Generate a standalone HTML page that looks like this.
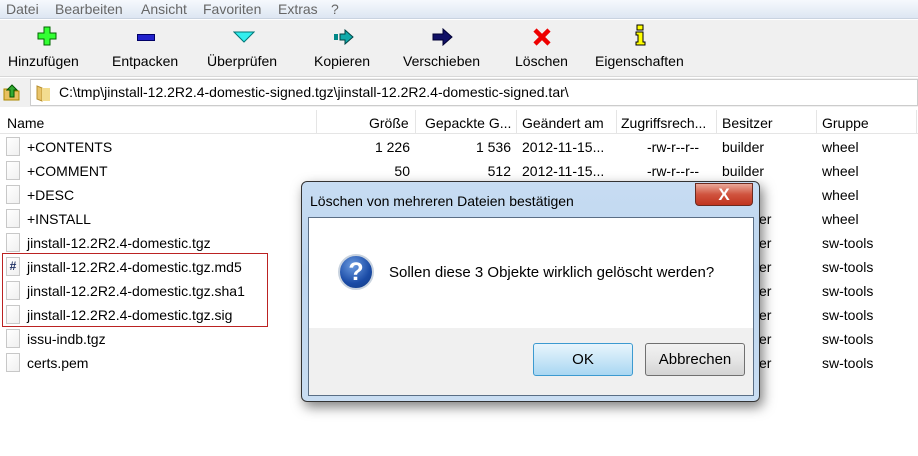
<!DOCTYPE html>
<html><head><style>
*{margin:0;padding:0;box-sizing:border-box}
body{width:918px;height:456px;overflow:hidden;background:#fff;font-family:"Liberation Sans",sans-serif;font-size:14px;color:#000;position:relative}
.abs{position:absolute}
.menu{left:0;top:0;width:918px;height:19px;background:linear-gradient(#f6f9fd,#dde6f2);color:#666;font-size:14px;border-bottom:1px solid #c9d3e0}
.menu span{position:absolute;top:1px}
.tb{left:0;top:20px;width:918px;height:57px;background:#f0f0f0;border-bottom:1px solid #d8d8d8}
.tb .l{position:absolute;top:33px;font-size:14px}
.addr{left:0;top:78px;width:918px;height:29px;background:#f0f0f0}
.addr .box{position:absolute;left:30px;top:1px;right:0;height:27px;background:#fff;border:1px solid #ccc}
.hdr{left:0;top:110px;width:918px;height:24px;border-bottom:1px solid #e5e5e5}
.hdr span{position:absolute;top:5px}
.sep{position:absolute;top:0;width:1px;height:24px;background:#e5e5e5}
.row{position:absolute;left:0;width:918px;height:24px}
.row span{position:absolute;top:4px;white-space:nowrap}
.fi{position:absolute;left:6px;top:2px;width:14px;height:19px;border:1px solid #c8c8c8;background:linear-gradient(135deg,#fff,#f0f0f0)}
.r{text-align:right}
</style></head><body>
<div class="abs menu"><span style="left:6px">Datei</span><span style="left:55px">Bearbeiten</span><span style="left:141px">Ansicht</span><span style="left:203px">Favoriten</span><span style="left:278px">Extras</span><span style="left:331px">?</span></div>
<div class="abs tb">
<svg class="abs" style="left:37px;top:6px" width="20" height="20"><path d="M7 1h6v6h6v6h-6v6H7v-6H1V7h6z" fill="#3f3" stroke="#060" stroke-width="1"/></svg>
<div class="abs" style="left:137px;top:14px;width:18px;height:7px;background:#22c;border:1px solid #006"></div>
<svg class="abs" style="left:233px;top:11px" width="22" height="12"><path d="M1 1h20L11 11z" fill="#3ee" stroke="#077"/></svg>
<svg class="abs" style="left:333px;top:9px" width="22" height="16"><rect x="1" y="5" width="4" height="6" fill="#088"/><path d="M7 5h5V1l8 7-8 7v-4H7z" fill="#1aa" stroke="#044"/></svg>
<svg class="abs" style="left:432px;top:8px" width="22" height="18"><path d="M1 6h10V1l9 8-9 8v-5H1z" fill="#116" stroke="#003"/></svg>
<svg class="abs" style="left:532px;top:7px" width="20" height="20"><path d="M3 3L17 17M17 3L3 17" stroke="#e00" stroke-width="4.5"/></svg>
<svg class="abs" style="left:634px;top:4px" width="13" height="22"><rect x="3" y="1" width="6" height="5" fill="#ff0" stroke="#000"/><path d="M2 8h7v10h2v3H2v-3h2v-7H2z" fill="#ff0" stroke="#000"/></svg>
<span class="l" style="left:8px">Hinzufügen</span><span class="l" style="left:112px">Entpacken</span><span class="l" style="left:207px">Überprüfen</span><span class="l" style="left:314px">Kopieren</span><span class="l" style="left:403px">Verschieben</span><span class="l" style="left:515px">Löschen</span><span class="l" style="left:595px">Eigenschaften</span>
</div>
<div class="abs addr">
<svg class="abs" style="left:3px;top:5px" width="18" height="18"><path d="M1 6h6l1 2h8v9H1z" fill="#e8c060" stroke="#a80"/><path d="M7 14V7H4l5-5 5 5h-3v7z" fill="#3a3" stroke="#050"/></svg>
<div class="box"><svg class="abs" style="left:4px;top:4px" width="16" height="18"><path d="M2 2l5 2v13l-5-2z" fill="#e9c46a" stroke="#b99030"/><path d="M7 4h8v13H7z" fill="#f3dc90"/></svg><span class="abs" style="left:28px;top:4px">C:\tmp\jinstall-12.2R2.4-domestic-signed.tgz\jinstall-12.2R2.4-domestic-signed.tar\</span></div>
</div>
<div class="abs hdr">
<span style="left:7px">Name</span><span style="left:369px">Größe</span><span style="left:425px">Gepackte G...</span><span style="left:522px">Geändert am</span><span style="left:621px">Zugriffsrech...</span><span style="left:722px">Besitzer</span><span style="left:822px">Gruppe</span>
<div class="sep" style="left:316px"></div><div class="sep" style="left:415px"></div><div class="sep" style="left:516px"></div><div class="sep" style="left:616px"></div><div class="sep" style="left:716px"></div><div class="sep" style="left:816px"></div><div class="sep" style="left:916px"></div>
</div>

<div class="row" style="top:135px"><div class="fi"></div><span style="left:27px">+CONTENTS</span><span class="r" style="right:508px">1 226</span><span class="r" style="right:407px">1 536</span><span style="left:522px">2012-11-15...</span><span style="left:647px">-rw-r--r--</span><span style="left:722px">builder</span><span style="left:822px">wheel</span></div>
<div class="row" style="top:159px"><div class="fi"></div><span style="left:27px">+COMMENT</span><span class="r" style="right:508px">50</span><span class="r" style="right:407px">512</span><span style="left:522px">2012-11-15...</span><span style="left:647px">-rw-r--r--</span><span style="left:722px">builder</span><span style="left:822px">wheel</span></div>
<div class="row" style="top:183px"><div class="fi"></div><span style="left:27px">+DESC</span><span style="left:822px">wheel</span></div>
<div class="row" style="top:207px"><div class="fi"></div><span style="left:27px">+INSTALL</span><span style="left:759px">er</span><span style="left:822px">wheel</span></div>
<div class="row" style="top:231px"><div class="fi"></div><span style="left:27px">jinstall-12.2R2.4-domestic.tgz</span><span style="left:759px">er</span><span style="left:822px">sw-tools</span></div>
<div class="row" style="top:255px"><div class="fi" style="color:#236;font-weight:bold;font-size:12px;line-height:17px;text-align:center">#</div><span style="left:27px">jinstall-12.2R2.4-domestic.tgz.md5</span><span style="left:759px">er</span><span style="left:822px">sw-tools</span></div>
<div class="row" style="top:279px"><div class="fi"></div><span style="left:27px">jinstall-12.2R2.4-domestic.tgz.sha1</span><span style="left:759px">er</span><span style="left:822px">sw-tools</span></div>
<div class="row" style="top:303px"><div class="fi"></div><span style="left:27px">jinstall-12.2R2.4-domestic.tgz.sig</span><span style="left:759px">er</span><span style="left:822px">sw-tools</span></div>
<div class="row" style="top:327px"><div class="fi"></div><span style="left:27px">issu-indb.tgz</span><span style="left:759px">er</span><span style="left:822px">sw-tools</span></div>
<div class="row" style="top:351px"><div class="fi"></div><span style="left:27px">certs.pem</span><span style="left:759px">er</span><span style="left:822px">sw-tools</span></div>
<div class="abs" style="left:2px;top:253px;width:266px;height:74px;border:1px solid #b22"></div>

<div class="abs" style="left:301px;top:181px;width:459px;height:221px;border:1px solid #333;border-radius:6px;background:linear-gradient(#c7dcf2,#bcd5ef 40%,#c9ddf2);box-shadow:3px 5px 12px rgba(0,0,0,.5)">
<span class="abs" style="left:8px;top:11px">Löschen von mehreren Dateien bestätigen</span>
<div class="abs" style="left:393px;top:1px;width:58px;height:23px;border:1px solid #6a2a20;border-radius:0 0 4px 4px;background:linear-gradient(#e9a99a,#d0533e 50%,#c0341e);color:#fff;font-weight:bold;font-size:17px;text-align:center;line-height:21px">X</div>
<div class="abs" style="left:6px;top:35px;width:446px;height:179px;border:1px solid #5a6e85;background:#f0f0f0">
<div class="abs" style="left:0;top:0;width:444px;height:110px;background:#fff"></div>
<div class="abs" style="left:29px;top:36px;width:36px;height:36px;border-radius:50%;background:radial-gradient(circle at 40% 30%,#6b9be0,#1a4ba6 60%,#123a80);border:2px solid #c9d3df;color:#fff;font-weight:bold;font-size:25px;text-align:center;line-height:32px">?</div>
<span class="abs" style="left:80px;top:46px;font-size:15px">Sollen diese 3 Objekte wirklich gelöscht werden?</span>
<div class="abs" style="left:224px;top:125px;width:100px;height:33px;border:1px solid #3c9ad0;border-radius:3px;background:linear-gradient(#e8f5fc,#c9e6f7 50%,#a9d7f2);text-align:center;line-height:31px;font-size:15px">OK</div>
<div class="abs" style="left:336px;top:125px;width:100px;height:33px;border:1px solid #707070;border-radius:3px;background:linear-gradient(#f2f2f2,#e6e6e6 50%,#d3d3d3);text-align:center;line-height:31px;font-size:15px">Abbrechen</div>
</div>
</div>
</body></html>
